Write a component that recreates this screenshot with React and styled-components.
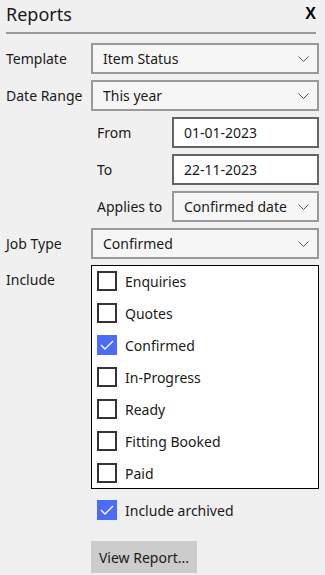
import React, { useState } from 'react';
import styled, { createGlobalStyle } from 'styled-components';

const GlobalStyle = createGlobalStyle`
    body {
        margin: 0;
        background: #f0f0f0;
        font-family: "Noto Sans", "Open Sans", sans-serif;
        color: #1a1a1a;
    }
`

const Panel = styled.div`
    width: 325px;
    height: 575px;
    box-sizing: border-box;
    padding: 0 9px 0 6px;
    overflow: hidden;
`

const Header = styled.div`
    height: 32px;
    display: flex;
    align-items: center;
    justify-content: space-between;
    border-bottom: 2px solid #999999;
`

const Title = styled.span`
    font-size: 18px;
    line-height: 32px;
    margin-top: -4px;
`

const Close = styled.span`
    font-family: "Liberation Sans", sans-serif;
    font-weight: bold;
    font-size: 16px;
    margin-top: -4px;
    color: #000;
`

const Form = styled.div`
    display: grid;
    grid-template-columns: 85px 1fr;
    row-gap: 6px;
    margin-top: 9px;
    font-size: 14px;
`

const Label = styled.div`
    display: flex;
    align-items: ${p => (p.$top ? 'flex-start' : 'center')};
    padding-top: ${p => (p.$top ? '5px' : '0')};
    height: ${p => (p.$top ? 'auto' : '31px')};
    white-space: nowrap;
    padding-left: ${p => (p.$sub ? '6px' : '0')};
`

const ComboBox = styled.div`
    height: 31px;
    box-sizing: border-box;
    border: 2px solid #999999;
    background: #f6f6f6;
    display: flex;
    align-items: center;
    padding: 0 8px 0 10px;
    gap: 11px;
`

const ComboText = styled.span`
    flex: 1;
    overflow: hidden;
    white-space: nowrap;
`

const TextBox = styled.div`
    height: 31px;
    box-sizing: border-box;
    border: 2px solid #646464;
    background: #ffffff;
    display: flex;
    align-items: center;
    padding: 0 10px;
`

const SubGrid = styled.div`
    grid-column: 2;
    display: grid;
    grid-template-columns: 81px 1fr;
    row-gap: 6px;
`

const List = styled.div`
    border: 1px solid #000;
    background: #ffffff;
    padding: 5px 5px;
    display: flex;
    flex-direction: column;
    gap: 12px;
`

const CheckRow = styled.label`
    display: flex;
    align-items: center;
    gap: 8px;
    height: 20px;
    cursor: pointer;
    padding-left: ${p => p.$indent || 0}px;
`

const Box = styled.span`
    width: 20px;
    height: 20px;
    box-sizing: border-box;
    border: ${p => (p.$checked ? 'none' : '2px solid #333333')};
    background: ${p => (p.$checked ? '#4a6cf7' : '#ffffff')};
    display: flex;
    align-items: center;
    justify-content: center;
    flex-shrink: 0;
`

const ArchivedRow = styled.div`
    grid-column: 2;
    margin-top: 5px;
`

const Button = styled.button`
    grid-column: 2;
    justify-self: start;
    margin-top: 15px;
    height: 32px;
    width: 106px;
    padding: 0;
    border: none;
    background: #cccccc;
    font-family: inherit;
    font-size: 14px;
    color: #1a1a1a;
`

function Chevron() {
    return (
        <svg width="11" height="6" viewBox="0 0 11 6" style={{ flexShrink: 0 }}>
            <path d="M0.5 0.5 L5.5 5.5 L10.5 0.5" fill="none" stroke="#555" strokeWidth="1" />
        </svg>
    )
}

function Check({ checked, onToggle, label, indent }) {
    return (
        <CheckRow $indent={indent} onClick={onToggle}>
            <Box $checked={checked}>
                {checked && (
                    <svg width="14" height="10" viewBox="0 0 14 10">
                        <path d="M1 5 L5 9 L13 1" fill="none" stroke="#fff" strokeWidth="1.3" />
                    </svg>
                )}
            </Box>
            <span>{label}</span>
        </CheckRow>
    )
}

const statuses = ['Enquiries', 'Quotes', 'Confirmed', 'In-Progress', 'Ready', 'Fitting Booked', 'Paid'];

function App() {
    const [included, setIncluded] = useState(['Confirmed']);
    const [archived, setArchived] = useState(true);

    function toggle(name) {
        setIncluded(included.includes(name) ? included.filter(n => n !== name) : [...included, name]);
    }

    return (
        <>
            <GlobalStyle />
            <Panel>
                <Header>
                    <Title>Reports</Title>
                    <Close>X</Close>
                </Header>
                <Form>
                    <Label>Template</Label>
                    <ComboBox><ComboText>Item Status</ComboText><Chevron /></ComboBox>

                    <Label>Date Range</Label>
                    <ComboBox><ComboText>This year</ComboText><Chevron /></ComboBox>

                    <SubGrid>
                        <Label $sub>From</Label>
                        <TextBox>01-01-2023</TextBox>
                        <Label $sub>To</Label>
                        <TextBox>22-11-2023</TextBox>
                        <Label $sub>Applies to</Label>
                        <ComboBox><ComboText>Confirmed date</ComboText><Chevron /></ComboBox>
                    </SubGrid>

                    <Label>Job Type</Label>
                    <ComboBox><ComboText>Confirmed</ComboText><Chevron /></ComboBox>

                    <Label $top>Include</Label>
                    <List>
                        {statuses.map(s => (
                            <Check key={s} label={s} checked={included.includes(s)} onToggle={() => toggle(s)} />
                        ))}
                    </List>

                    <ArchivedRow>
                        <Check label="Include archived" checked={archived} onToggle={() => setArchived(!archived)} indent={6} />
                    </ArchivedRow>

                    <Button>View Report...</Button>
                </Form>
            </Panel>
        </>
    )
}

export default App;
